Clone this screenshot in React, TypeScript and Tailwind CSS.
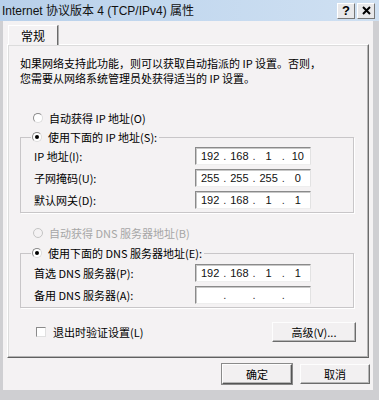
import React from "react";

const cjk = "font-['Noto_Sans_CJK_SC',sans-serif]";

function Radio({ on, disabled }: { on?: boolean; disabled?: boolean }) {
  return (
    <span
      className={`relative inline-flex size-[10px] shrink-0 items-center justify-center rounded-full border ${
        disabled ? "border-[#c4c4c4] bg-[#f4f2f3]" : "border-[#8a8a8a] border-b-[#dcdcdc] border-r-[#dcdcdc] bg-white"
      }`}
    >
      {on && <span className="size-[4px] rounded-full bg-black" />}
    </span>
  );
}

function IpBox({ parts }: { parts: string[] }) {
  return (
    <div className="flex h-[18px] w-[116px] items-center border border-[#8a8a8a] border-b-[#eeeeee] border-r-[#e2e2e2] bg-white pl-[2px] text-[11px] leading-none text-[#111] font-['Liberation_Sans',sans-serif] shadow-[inset_1px_1px_0_#c8c8c8]">
      {parts.map((p, i) => (
        <React.Fragment key={i}>
          {i > 0 && <span className="w-[5px] text-center text-[#333]">.</span>}
          <span className="w-[25px] text-center">{p}</span>
        </React.Fragment>
      ))}
    </div>
  );
}

function Row({ label, parts }: { label: string; parts: string[] }) {
  return (
    <div className="flex h-[18px] items-center justify-between pr-[42px]">
      <span>{label}</span>
      <IpBox parts={parts} />
    </div>
  );
}

function Btn({ children, w, strong }: { children: React.ReactNode; w: string; strong?: boolean }) {
  return (
    <div
      className={`flex h-[20px] ${w} items-center justify-center border border-t-[#fdfdfd] border-l-[#fdfdfd] ${
        strong ? "border-b-[#555] border-r-[#555] outline outline-1 outline-[#8a8a8a]" : "border-b-[#6c6c6c] border-r-[#6c6c6c]"
      } bg-[#f2f0f1] text-[11px] shadow-[inset_-1px_-1px_0_#b6b6b6]`}
    >
      {children}
    </div>
  );
}

export default function App() {
  return (
    <div className={`flex h-[400px] w-[379px] flex-col bg-[#cfcfd2] text-black ${cjk}`}>
      {/* title bar */}
      <div className="flex h-[21px] items-center justify-between bg-gradient-to-r from-[#b8d0ea] via-[#c4d9ef] to-[#cfe0f2] pl-[2px] pr-[4px]">
        <span className="text-[12px] leading-none font-['Liberation_Sans','Noto_Sans_CJK_SC',sans-serif] text-[#111]">
          Internet 协议版本 4 (TCP/IPv4) 属性
        </span>
        <div className="flex gap-[2px]">
          <div className="flex h-[16px] w-[18px] items-center justify-center border border-t-white border-l-white border-b-[#777] border-r-[#777] bg-[#e8e8ea] text-[13px] font-bold leading-none font-['Liberation_Sans',sans-serif]">
            ?
          </div>
          <div className="flex h-[16px] w-[18px] items-center justify-center border border-t-white border-l-white border-b-[#777] border-r-[#777] bg-[#e8e8ea]">
            <svg width="9" height="9" viewBox="0 0 9 9">
              <path d="M1 1 L8 8 M8 1 L1 8" stroke="#000" strokeWidth="2" />
            </svg>
          </div>
        </div>
      </div>

      {/* body */}
      <div className="ml-[3px] mr-[6px] mb-[10px] flex flex-1 flex-col bg-[#f4f2f3] pt-[4px]">
        {/* tab */}
        <div className="relative z-10 ml-[5px] flex h-[20px] w-[50px] items-center justify-center border border-b-0 border-t-[#fff] border-l-[#fff] border-r-[#6a6a6a] bg-[#f4f2f3] text-[12px] shadow-[1px_0_0_#b0b0b0]">
          常规
        </div>
        {/* panel */}
        <div className="-mt-[1px] ml-[4px] flex h-[314px] w-[362px] flex-col border border-t-[#fff] border-l-[#fff] border-b-[#606060] border-r-[#6c6c6c] pl-[12px] pt-[11px] text-[11px] leading-[14px] shadow-[inset_-1px_-1px_0_#b4b4b4,inset_1px_1px_0_#dcdcdc]">
          <div className="leading-[15px]">
            <div>如果网络支持此功能，则可以获取自动指派的 IP 设置。否则，</div>
            <div>您需要从网络系统管理员处获得适当的 IP 设置。</div>
          </div>

          <div className="mt-[25px] flex items-center gap-[6px] pl-[13px]">
            <Radio />
            <span>自动获得 IP 地址(O)</span>
          </div>

          <fieldset className="mt-[5px] mr-[14px] h-[83px] border border-[#c8c6c8] pl-[13px] pr-0 shadow-[1px_1px_0_#fff]">
            <legend className="-ml-[3px] flex items-center gap-[6px] bg-[#f4f2f3] pl-[1px] pr-[2px]">
              <Radio on />
              <span>使用下面的 IP 地址(S):</span>
            </legend>
            <div className="mt-[3px] flex flex-col gap-[4px]">
              <Row label="IP 地址(I):" parts={["192", "168", "1", "10"]} />
              <Row label="子网掩码(U):" parts={["255", "255", "255", "0"]} />
              <Row label="默认网关(D):" parts={["192", "168", "1", "1"]} />
            </div>
          </fieldset>

          <div className="mt-[13px] flex items-center gap-[6px] pl-[13px] text-[#a6a6a6]">
            <Radio disabled />
            <span>自动获得 DNS 服务器地址(B)</span>
          </div>

          <fieldset className="mt-[6px] mr-[14px] h-[62px] border border-[#c8c6c8] pl-[13px] pr-0 shadow-[1px_1px_0_#fff]">
            <legend className="-ml-[3px] flex items-center gap-[6px] bg-[#f4f2f3] pl-[1px] pr-[2px]">
              <Radio on />
              <span>使用下面的 DNS 服务器地址(E):</span>
            </legend>
            <div className="mt-[4px] flex flex-col gap-[4px]">
              <Row label="首选 DNS 服务器(P):" parts={["192", "168", "1", "1"]} />
              <Row label="备用 DNS 服务器(A):" parts={["", "", "", ""]} />
            </div>
          </fieldset>

          <div className="mt-[14px] mr-[12px] flex items-center justify-between">
            <div className="flex items-center gap-[7px] pl-[16px]">
              <span className="size-[10px] border border-[#8a8a8a] border-b-[#e0e0e0] border-r-[#e0e0e0] bg-white" />
              <span>退出时验证设置(L)</span>
            </div>
            <Btn w="w-[84px]">高级(V)...</Btn>
          </div>
        </div>

        {/* bottom buttons */}
        <div className="mt-[6px] flex justify-end gap-[8px] pr-[3px]">
          <Btn w="w-[70px]" strong>
            确定
          </Btn>
          <Btn w="w-[70px]">取消</Btn>
        </div>
      </div>
    </div>
  );
}
